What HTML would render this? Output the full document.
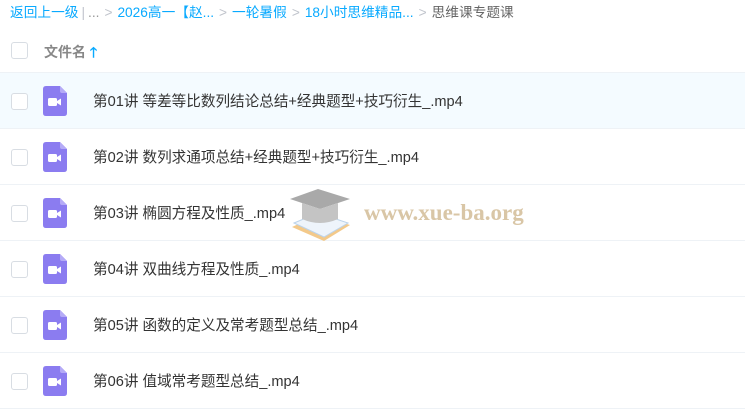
<html><head><style>
body{margin:0;width:745px;height:410px;overflow:hidden;background:#fff;font-family:"Liberation Sans","Noto Sans CJK SC",sans-serif;}
.bc{position:absolute;top:4px;left:10px;font-size:13.7px;color:#09aaff;white-space:nowrap;line-height:18px}
.bc .g{color:#c0c4cc;margin:0 5px}
.bc .d{color:#666}
.hd{position:absolute;top:28px;left:0;width:745px;height:44px;border-bottom:1px solid #eef2f6}
.cb{position:absolute;left:11px;width:15px;height:15px;border:1px solid #d8dde3;border-radius:3px;background:#fff}
.row{position:absolute;left:0;width:745px;height:55px;border-bottom:1px solid #eef2f6}
.ic{position:absolute;left:43px;top:13px;width:24px;height:30px}
.nm{position:absolute;left:93px;top:2px;line-height:55px;font-size:14.6px;color:#333}
</style></head><body>
<div class="bc">返回上一级<span class="g" style="margin:0 3px">|</span><span style="color:#999">...</span><span class="g">&gt;</span>2026高一【赵...<span class="g">&gt;</span>一轮暑假<span class="g">&gt;</span>18小时思维精品...<span class="g">&gt;</span><span class="d">思维课专题课</span></div>
<div class="hd"><div class="cb" style="top:14px"></div><div style="position:absolute;left:44px;top:14px;font-size:14px;color:#888;font-weight:bold">文件名 <span style="color:#09aaff">🡑</span></div></div>
<svg width="0" height="0" style="position:absolute"><defs><g id="v"><path d="M3 0 H17 L24 7 V27 Q24 30 21 30 H3 Q0 30 0 27 V3 Q0 0 3 0Z" fill="#8b7cf0"/><path d="M17 0 L24 7 H19 Q17 7 17 5Z" fill="#b5abf7"/><rect x="5" y="12" width="9" height="8" rx="1.5" fill="#fff"/><path d="M14 15 L18 12.5 V19.5 L14 17Z" fill="#fff"/></g></defs></svg>
<div class="row" style="top:73px;background:#f4fbff"><div class="cb" style="top:20px"></div><svg class="ic"><use href="#v"/></svg><div class="nm">第01讲 等差等比数列结论总结+经典题型+技巧衍生_.mp4</div></div>
<div class="row" style="top:129px"><div class="cb" style="top:20px"></div><svg class="ic"><use href="#v"/></svg><div class="nm">第02讲 数列求通项总结+经典题型+技巧衍生_.mp4</div></div>
<div class="row" style="top:185px"><div class="cb" style="top:20px"></div><svg class="ic"><use href="#v"/></svg><div class="nm">第03讲 椭圆方程及性质_.mp4</div></div>
<div class="row" style="top:241px"><div class="cb" style="top:20px"></div><svg class="ic"><use href="#v"/></svg><div class="nm">第04讲 双曲线方程及性质_.mp4</div></div>
<div class="row" style="top:297px"><div class="cb" style="top:20px"></div><svg class="ic"><use href="#v"/></svg><div class="nm">第05讲 函数的定义及常考题型总结_.mp4</div></div>
<div class="row" style="top:353px"><div class="cb" style="top:20px"></div><svg class="ic"><use href="#v"/></svg><div class="nm">第06讲 值域常考题型总结_.mp4</div></div>
<svg style="position:absolute;left:288px;top:185px" width="70" height="60">
<path d="M4 42 L30 30 L62 40 L36 56 Z" fill="#f3c98a"/>
<path d="M6 38 L30 28 L60 38 L36 52 Z" fill="#eef4fb" stroke="#bcd3ea"/>
<path d="M2 14 L30 4 L62 14 L32 24 Z" fill="#a9a9a9"/>
<path d="M14 18 L14 34 Q32 42 50 34 L50 18 L32 24 Z" fill="#c4c4c4"/>
</svg>
<div style="position:absolute;left:364px;top:200px;font-family:'Liberation Serif',serif;font-weight:bold;font-size:23px;color:#d9c6a6">www.xue-ba.org</div>
</body></html>
